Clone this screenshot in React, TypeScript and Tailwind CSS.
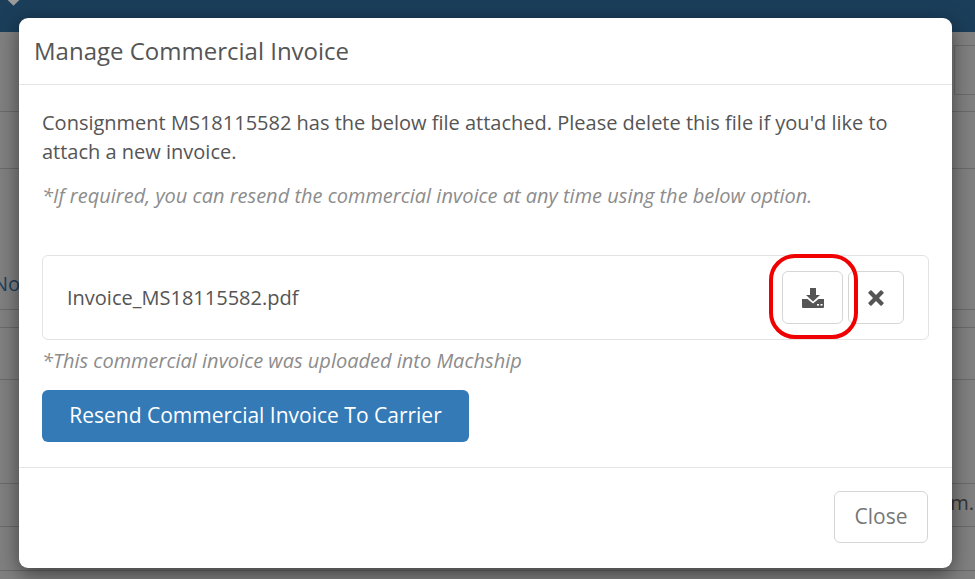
import React from "react";

const rowHeights = [56, 57, 141, 18, 52, 104, 43, 44, 9];

function Backdrop() {
  return (
    <div className="h-[579px] w-[975px] bg-[#808080] overflow-hidden flex flex-col">
      <div className="h-[32px] shrink-0 bg-[#1b3e5a] flex justify-start">
        <div className="ml-[9px] mt-[-5px] h-[9px] w-[9px] rotate-45 bg-[#9a9a9a]" />
      </div>
      <div className="flex justify-end pr-0 h-[24px] shrink-0 pt-[13px]">
        <div className="h-[50px] w-[21px] border border-[#6c6c6c] border-r-0" />
      </div>
      <div className="h-[56px] shrink-0 border-b border-[#6a6a6a]" />
      {rowHeights.slice(1).map((h, i) => (
        <div key={i} style={{ height: h }} className="shrink-0 border-b border-[#6a6a6a] relative text-[20px] text-[#1c3f5e]">
          {i === 1 && <span className="absolute left-[-7px] bottom-[10px]">No</span>}
          {i === 5 && <span className="absolute right-[1px] bottom-[8px] text-[#333]">em.</span>}
        </div>
      ))}
    </div>
  );
}

function DownloadIcon() {
  return (
    <svg width="22" height="20" viewBox="0 0 22 20" fill="#555">
      <path d="M8 0h6v7h4l-7 6.5L4 7h4z" />
      <path d="M0 11h5.5l5.5 4.6L16.500 11H22v8a1 1 0 0 1-1 1H1a1 1 0 0 1-1-1z" />
      <rect x="15" y="16" width="2" height="1.600" fill="#fff" />
      <rect x="18.500" y="16" width="2" height="1.600" fill="#fff" />
    </svg>
  );
}

function CloseIcon() {
  return (
    <svg width="16" height="16" viewBox="0 0 16 16" fill="#555">
      <path d="M3.600.6 8 5 12.400.6a1 1 0 0 1 1.400 0l1.600 1.600a1 1 0 0 1 0 1.400L11 8l4.400 4.400a1 1 0 0 1 0 1.400l-1.600 1.600a1 1 0 0 1-1.400 0L8 11l-4.400 4.400a1 1 0 0 1-1.400 0L.6 13.800a1 1 0 0 1 0-1.400L5 8 .6 3.600a1 1 0 0 1 0-1.400L2.200.6a1 1 0 0 1 1.400 0z" />
    </svg>
  );
}

export default function App() {
  return (
    <div className="relative h-[579px] w-[975px] overflow-hidden font-['Open_Sans',sans-serif] text-[#555]">
      <Backdrop />
      <div className="absolute left-[19px] top-[18px] flex h-[550px] w-[933px] flex-col rounded-[9px] bg-white shadow-[0_6px_20px_rgba(0,0,0,0.5)]">
        <div className="flex h-[67px] shrink-0 items-center border-b border-[#e5e5e5] pl-[15px]">
          <h4 className="text-[24px] leading-none text-[#555]">Manage Commercial Invoice</h4>
        </div>
        <div className="flex-1 px-[23px] pt-[23px]">
          <p className="text-[20px] leading-[29px] text-[#555]">
            Consignment MS18115582 has the below file attached. Please delete this file if you'd like to attach a new invoice.
          </p>
          <p className="mt-[15px] text-[20px] italic leading-[29px] text-[#8c8c8c]">
            *If required, you can resend the commercial invoice at any time using the below option.
          </p>
          <div className="relative mt-[45px] flex h-[85px] items-center justify-between rounded-[6px] border border-[#e3e3e3] pl-[24px] pr-[24px]">
            <span className="text-[20px] text-[#555]">Invoice_MS18115582.pdf</span>
            <div className="flex items-center gap-[5px]">
              <button className="flex h-[53px] w-[61px] items-center justify-center rounded-[6px] border border-[#d6d6d6] bg-white">
                <DownloadIcon />
              </button>
              <button className="flex h-[53px] w-[56px] items-center justify-center rounded-[6px] border border-[#d6d6d6] bg-white">
                <CloseIcon />
              </button>
            </div>
            <div className="absolute left-[726px] top-[-2px] h-[85px] w-[89px] rounded-[26px] border-[4px] border-[#f00000]" />
          </div>
          <p className="mt-[6px] text-[20px] italic leading-[29px] text-[#8c8c8c]">
            *This commercial invoice was uploaded into Machship
          </p>
          <button className="mt-[15px] flex h-[52px] w-[427px] items-center justify-center rounded-[6px] bg-[#337ab7] text-[21px] text-white">
            Resend Commercial Invoice To Carrier
          </button>
        </div>
        <div className="flex h-[101px] shrink-0 items-start justify-end border-t border-[#e5e5e5] pr-[24px] pt-[23px]">
          <button className="flex h-[52px] w-[94px] items-center justify-center rounded-[6px] border border-[#d6d6d6] bg-white text-[21px] text-[#777]">
            Close
          </button>
        </div>
      </div>
    </div>
  );
}
